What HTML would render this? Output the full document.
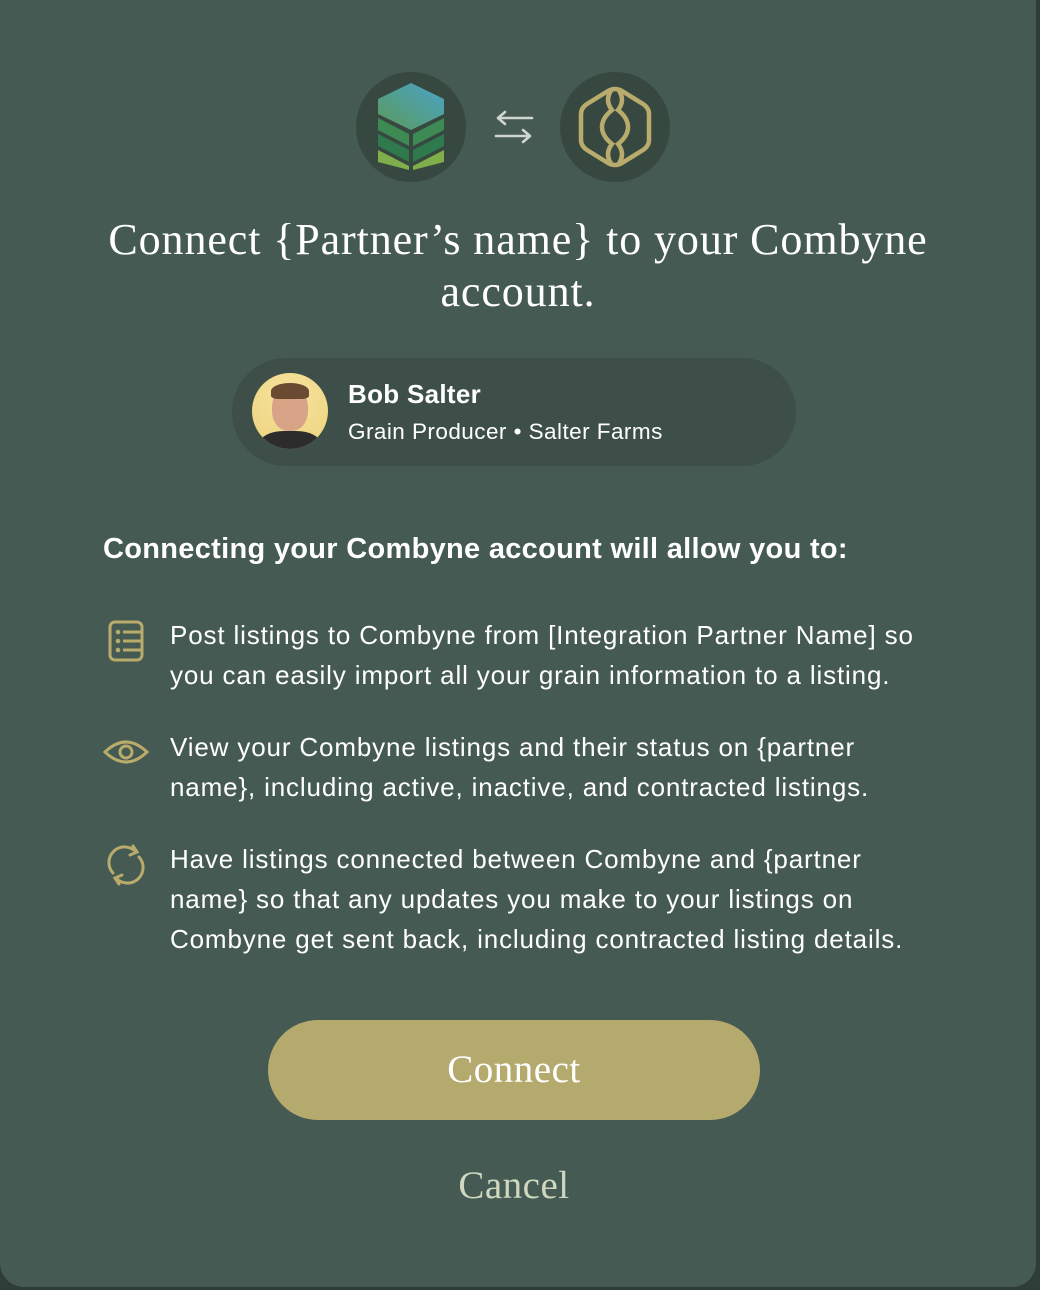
<!DOCTYPE html>
<html><head><meta charset="utf-8"><style>
html,body{margin:0;padding:0;width:1040px;height:1290px;background:#2f3d38;overflow:hidden}
.card{position:absolute;left:0;top:-30px;width:1036px;height:1317px;background:#455a52;border-radius:24px;}
.abs{position:absolute}
.serif{font-family:"Liberation Serif",serif}
.sans{font-family:"Liberation Sans",sans-serif}
.circ{position:absolute;width:110px;height:110px;border-radius:50%;background:#374841}
.title{position:absolute;left:0;width:1036px;top:214px;text-align:center;color:#fff;font-size:44px;letter-spacing:0.9px;line-height:52px;white-space:nowrap}
.pill{position:absolute;left:232px;top:358px;width:564px;height:108px;border-radius:54px;background:#3d4f48}
.item{position:absolute;left:170px;color:#fff;font-size:26px;letter-spacing:0.85px;line-height:40px;white-space:nowrap}
.btn{position:absolute;left:268px;top:1020px;width:492px;height:100px;border-radius:50px;background:#b5aa6e;color:#fff;text-align:center;line-height:100px;font-size:39px;letter-spacing:0.5px}
</style></head><body>
<div class="card"></div>
<div class="circ" style="left:356px;top:72px">
<svg width="110" height="110" viewBox="0 0 110 110">
<defs><linearGradient id="g1" x1="0" y1="1" x2="1" y2="0"><stop offset="0" stop-color="#5a9a5a"/><stop offset="1" stop-color="#4aa3c8"/></linearGradient></defs>
<polygon points="22,27 55,11 88,27 88,42 55,58 22,42" fill="url(#g1)"/>
<polygon points="22,46 53,62 53,74 22,58" fill="#3e8a55"/><polygon points="57,62 88,46 88,58 57,74" fill="#3e8a55"/>
<polygon points="22,62 53,78 53,90 22,74" fill="#2f7a4c"/><polygon points="57,78 88,62 88,74 57,90" fill="#2f7a4c"/>
<polygon points="22,78 53,94 53,98 22,90" fill="#7fae4a"/><polygon points="57,94 88,78 88,90 57,98" fill="#7fae4a"/>
</svg></div>
<svg class="abs" style="left:492px;top:108px" width="44" height="40" viewBox="0 0 44 40"><g fill="none" stroke="#cfd6cf" stroke-width="2.6" stroke-linecap="round"><path d="M6 10H40M6 10l7-6M6 10l7 6"/><path d="M4 28H38M38 28l-7-6M38 28l-7 6"/></g></svg>
<div class="circ" style="left:560px;top:72px">
<svg width="110" height="110" viewBox="0 0 110 110"><g fill="none" stroke="#b9ab6c" stroke-width="4.5"><path d="M48 19 Q55 15 62 19 L83 32 Q89 36 89 42 L89 68 Q89 74 83 78 L62 91 Q55 95 48 91 L27 78 Q21 74 21 68 L21 42 Q21 36 27 32 Z"/><path d="M52 17 Q44 28 52 38 Q42 46 42 55 Q42 64 52 72 Q44 82 52 93"/><path d="M58 17 Q66 28 58 38 Q68 46 68 55 Q68 64 58 72 Q66 82 58 93"/></g></svg></div>
<div class="title serif">Connect {Partner’s name} to your Combyne<br>account.</div>
<div class="pill"></div>
<div class="abs" style="left:252px;top:373px;width:76px;height:76px;border-radius:50%;background:radial-gradient(circle at 50% 30%,#f6e3a0,#ecd27a);overflow:hidden">
<div class="abs" style="left:20px;top:14px;width:36px;height:44px;border-radius:45%;background:#d8a488"></div>
<div class="abs" style="left:19px;top:10px;width:38px;height:16px;border-radius:50% 50% 20% 20%;background:#6b4a32"></div>
<div class="abs" style="left:8px;top:58px;width:60px;height:30px;border-radius:40% 40% 0 0;background:#2c2c2c"></div></div>
<div class="abs sans" style="left:348px;top:379px;color:#fff;font-size:26px;font-weight:bold;letter-spacing:0.3px">Bob Salter</div>
<div class="abs sans" style="left:348px;top:419px;color:#fff;font-size:22.5px;letter-spacing:0.45px">Grain Producer • Salter Farms</div>
<div class="abs sans" style="left:103px;top:533px;color:#fff;font-size:29px;font-weight:bold;letter-spacing:0.3px;white-space:nowrap">Connecting your Combyne account will allow you to:</div>
<svg class="abs" style="left:106px;top:619px" width="40" height="44" viewBox="0 0 40 44"><g fill="none" stroke="#b9ab6c" stroke-width="3"><rect x="4" y="3" width="32" height="38" rx="5"/><path d="M17 13H35M17 22H35M17 31H35"/></g><g fill="#b9ab6c"><circle cx="12" cy="13" r="2.3"/><circle cx="12" cy="22" r="2.3"/><circle cx="12" cy="31" r="2.3"/></g></svg>
<div class="item sans" style="top:615px">Post listings to Combyne from [Integration Partner Name] so<br>you can easily import all your grain information to a listing.</div>
<svg class="abs" style="left:102px;top:736px" width="48" height="32" viewBox="0 0 48 32"><g fill="none" stroke="#b9ab6c" stroke-width="3"><path d="M3 16 Q24 -4 45 16 Q24 36 3 16Z"/><circle cx="24" cy="16" r="6"/></g></svg>
<div class="item sans" style="top:727px">View your Combyne listings and their status on {partner<br>name}, including active, inactive, and contracted listings.</div>
<svg class="abs" style="left:106px;top:843px" width="40" height="44" viewBox="0 0 40 44"><g fill="none" stroke="#b9ab6c" stroke-width="3" stroke-linecap="round"><path d="M7 30 A15 15 0 0 1 30 9"/><path d="M27 3 L31 9 L24 12"/><path d="M33 14 A15 15 0 0 1 10 35"/><path d="M13 41 L9 35 L16 32"/></g></svg>
<div class="item sans" style="top:839px">Have listings connected between Combyne and {partner<br>name} so that any updates you make to your listings on<br>Combyne get sent back, including contracted listing details.</div>
<div class="btn serif">Connect</div>
<div class="abs serif" style="left:0;width:1028px;top:1163px;text-align:center;color:#cfd8bf;font-size:39px;letter-spacing:0.5px">Cancel</div>
</body></html>
